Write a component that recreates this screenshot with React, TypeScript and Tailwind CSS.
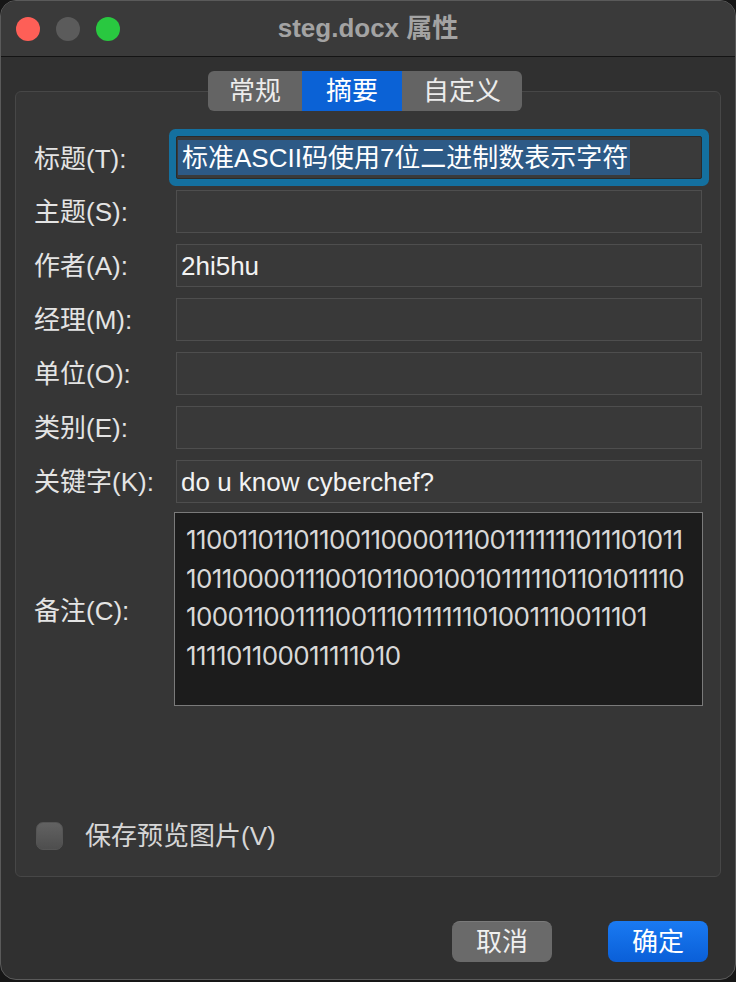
export default function App() {
  const rows = [
    { label: "主题(S):", value: "" },
    { label: "作者(A):", value: "2hi5hu" },
    { label: "经理(M):", value: "" },
    { label: "单位(O):", value: "" },
    { label: "类别(E):", value: "" },
    { label: "关键字(K):", value: "do u know cyberchef?" },
  ];
  const lines = [
    "11001101101100110000111001111111011101011",
    "1011000011100101100100101111101101011110",
    "10001100111100111011111101001110011101",
    "111101100011111010",
  ];
  return (
    <div className="w-[736px] h-[982px] bg-[#161616] font-['Liberation_Sans','Noto_Sans_CJK_SC',sans-serif] text-[26px]">
      <div className="w-[736px] h-[980px] rounded-[16px] border border-[#5a5a5a] bg-[#303030] overflow-hidden flex flex-col">
        {/* Title bar */}
        <div className="h-[56px] shrink-0 bg-[#3a3a3a] border-b border-[#141414] grid grid-cols-[1fr_auto_1fr] items-center">
          <div className="flex items-center gap-[16px] pl-[15px]">
            <div className="w-[24px] h-[24px] rounded-full bg-[#fe5f57]" />
            <div className="w-[24px] h-[24px] rounded-full bg-[#5b5b5b]" />
            <div className="w-[24px] h-[24px] rounded-full bg-[#29c840]" />
          </div>
          <div className="font-bold text-[#a3a3a3] leading-none pb-[2px]">steg.docx 属性</div>
          <div />
        </div>

        {/* Body */}
        <div className="flex flex-col pt-[14px]">
          <div className="flex pl-[207px] -mb-[20px] relative z-10">
            <div className="flex h-[40px] rounded-[6px] bg-[#646464] overflow-hidden text-[#ececec] leading-[40px]">
              <div className="w-[94px] text-center">常规</div>
              <div className="w-[100px] text-center bg-[#0b62d6] text-white">摘要</div>
              <div className="w-[120px] text-center">自定义</div>
            </div>
          </div>

          <div className="mx-[14px] h-[786px] rounded-[6px] border border-[#474747] bg-[#363636] flex flex-col pt-[44px] px-[18px]">
            <div className="flex flex-col gap-[11px]">
              <div className="flex items-center h-[43px]">
                <div className="w-[142px] shrink-0 text-[#e4e4e4] leading-none pt-[3px]">标题(T):</div>
                <div className="flex-1 min-w-0 h-full rounded-[2px] border border-[#2b2b2b] bg-[#3a3a3a] ring-[7px] ring-[#14709f] flex items-center px-[1px] py-[3px]">
                  <span className="h-full flex items-center bg-[#2d5a86] pl-[4px] pr-[2px] text-white leading-none">
                    标准ASCII码使用7位二进制数表示字符
                  </span>
                </div>
              </div>
              {rows.map((r) => (
                <div key={r.label} className="flex items-center h-[43px]">
                  <div className="w-[142px] shrink-0 text-[#e4e4e4] leading-none">{r.label}</div>
                  <div className="flex-1 min-w-0 h-full border border-[#4e4e4e] bg-[#393939] flex items-center px-[4px] text-[#f2f2f2] leading-none">
                    {r.value}
                  </div>
                </div>
              ))}
            </div>

            <div className="flex items-center mt-[9px]">
              <div className="w-[140px] shrink-0 text-[#e4e4e4] leading-none pt-[3px]">备注(C):</div>
              <div className="flex-1 min-w-0 overflow-hidden -mr-[1px] h-[194px] border border-[#7a7a7a] bg-[#1c1c1c] pl-[11px] pt-[8px] text-[#d8d8d8] leading-[38.7px] tracking-[-0.6px] font-['Inter',sans-serif]">
                {lines.map((l, i) => (
                  <div key={i} className="whitespace-nowrap">{l}</div>
                ))}
              </div>
            </div>

            <div className="mt-auto pb-[26px] flex items-center">
              <div className="ml-[2px] w-[27px] h-[28px] rounded-[7px] border border-[#555] bg-gradient-to-b from-[#626262] to-[#4e4e4e]" />
              <div className="ml-[22px] text-[#d6d6d6] leading-none">保存预览图片(V)</div>
            </div>
          </div>

          <div className="flex justify-end gap-[56px] pr-[27px] mt-[44px]">
            <div className="w-[100px] h-[41px] rounded-[8px] bg-[#6a6a6a] border-t border-[#7a7a7a] flex items-center justify-center text-[#f0f0f0] leading-none">取消</div>
            <div className="w-[100px] h-[41px] rounded-[8px] bg-gradient-to-b from-[#1a7af2] to-[#0a5fd8] flex items-center justify-center text-white leading-none">确定</div>
          </div>
        </div>
      </div>
    </div>
  );
}
